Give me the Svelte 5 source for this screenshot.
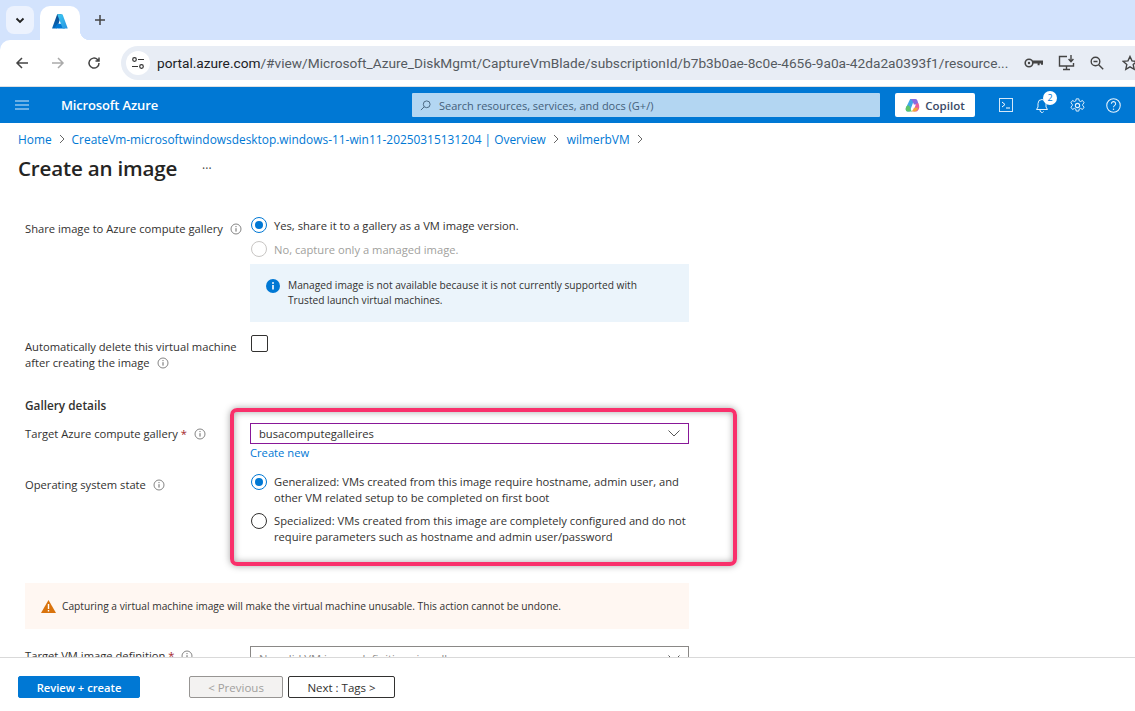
<script>
	let crumbs = [
		"Home",
		"CreateVm-microsoftwindowsdesktop.windows-11-win11-20250315131204 | Overview",
		"wilmerbVM"
	];
</script>

{#snippet infoIcon()}
	<svg class="info" viewBox="0 0 12 12" width="12" height="12">
		<circle cx="6" cy="6" r="5" fill="none" stroke="#777" stroke-width="0.9" />
		<path d="M6 5.2v3.4" stroke="#666" stroke-width="1" />
		<circle cx="6" cy="3.6" r="0.6" fill="#666" />
	</svg>
{/snippet}

<div class="page">
	<div class="tabstrip">
		<div class="tabmenu">
			<svg viewBox="0 0 12 12" width="12" height="12"><path d="M2.5 4.5L6 8l3.5-3.5" fill="none" stroke="#222" stroke-width="1.8" /></svg>
		</div>
		<div class="tab">
			<svg viewBox="0 0 16 15" width="16" height="15">
				<defs>
					<linearGradient id="az1" x1="0" y1="0" x2="0" y2="1"><stop offset="0" stop-color="#114a8b" /><stop offset="1" stop-color="#0669bc" /></linearGradient>
					<linearGradient id="az2" x1="0" y1="0" x2="1" y2="1"><stop offset="0" stop-color="#3ccbf4" /><stop offset="1" stop-color="#2892df" /></linearGradient>
				</defs>
				<path d="M5.2 0.3H9.6L5 14.6H0.6a.5.5 0 0 1-.4-.7z" fill="url(#az1)" />
				<path d="M11.8 9.8H5.4l-2.6 3.9 3.2.9h6.9z" fill="#0078d4" />
				<path d="M5.2.3h4.9c.3 0 .5.2.6.4l4.9 13.2a.5.5 0 0 1-.4.7h-4.5L5.2.3z" fill="url(#az2)" />
			</svg>
		</div>
		<svg class="newtab" viewBox="0 0 12 12" width="12" height="12"><path d="M6 1v10M1 6h10" stroke="#444" stroke-width="1.5" /></svg>
	</div>

	<div class="toolbar">
		<svg viewBox="0 0 14 14" width="14" height="14"><path d="M13 7H2M7 2L2 7l5 5" fill="none" stroke="#444" stroke-width="1.5" /></svg>
		<svg viewBox="0 0 14 14" width="14" height="14"><path d="M1 7h11M7 2l5 5-5 5" fill="none" stroke="#aaa" stroke-width="1.5" /></svg>
		<svg viewBox="0 0 14 14" width="14" height="14"><path d="M12 7a5 5 0 1 1-1.5-3.5L12 5M12 1.5V5H8.5" fill="none" stroke="#444" stroke-width="1.5" /></svg>
		<div class="urlbar">
			<div class="sitebtn">
				<svg viewBox="0 0 14 14" width="14" height="14">
					<circle cx="3.5" cy="3.5" r="1.8" fill="none" stroke="#333" stroke-width="1.2" />
					<path d="M7 3.5h6M1 10.5h6" stroke="#333" stroke-width="1.2" />
					<circle cx="10.5" cy="10.5" r="1.8" fill="none" stroke="#333" stroke-width="1.2" />
				</svg>
			</div>
			<span class="url"><span class="host">portal.azure.com</span>/#view/Microsoft_Azure_DiskMgmt/CaptureVmBlade/subscriptionId/b7b3b0ae-8c0e-4656-9a0a-42da2a0393f1/resource...</span>
			<div class="urlicons">
				<svg viewBox="0 0 19 12" width="19" height="12">
					<circle cx="5" cy="6" r="3.8" fill="none" stroke="#444" stroke-width="1.6" />
					<circle cx="5" cy="6" r="1.2" fill="#444" />
					<path d="M8.500 3.600H19v4.200h-2V6.600h-1.400v1.600h-2V6.600H8.500z" fill="#444" />
				</svg>
				<svg viewBox="0 0 17 16" width="17" height="16">
					<path d="M9 1.5H1.5v9.5h14V8" fill="none" stroke="#444" stroke-width="1.4" />
					<path d="M5 14.5h7M8.5 11v3.5" stroke="#444" stroke-width="1.4" />
					<path d="M13 0v6M10.6 4L13 6.6 15.4 4" fill="none" stroke="#444" stroke-width="1.4" />
				</svg>
				<svg viewBox="0 0 14 14" width="14" height="14">
					<circle cx="5.5" cy="5.5" r="4.3" fill="none" stroke="#444" stroke-width="1.4" />
					<path d="M3.5 5.5h4M8.7 8.7L13.2 13.2" stroke="#444" stroke-width="1.4" />
				</svg>
				<svg class="star" viewBox="0 0 16 16" width="16" height="16"><path d="M8 1.5l2 4.4 4.8.5-3.6 3.2 1 4.7L8 11.9l-4.2 2.4 1-4.7L1.2 6.4 6 5.9z" fill="none" stroke="#444" stroke-width="1.4" /></svg>
			</div>
		</div>
	</div>

	<div class="azurebar">
		<svg class="burger" viewBox="0 0 14 10" width="14" height="10"><path d="M0 1h14M0 5h14M0 9h14" stroke="#d5e8f8" stroke-width="1" /></svg>
		<span class="brand">Microsoft Azure</span>
		<div class="search">
			<svg viewBox="0 0 12 12" width="11" height="11"><circle cx="7.3" cy="4.7" r="3.7" fill="none" stroke="#44607a" /><path d="M4.6 7.4L1 11" stroke="#44607a" /></svg>
			<span>Search resources, services, and docs (G+/)</span>
		</div>
		<div class="copilot">
			<svg viewBox="0 0 16 16" width="15" height="15">
				<path d="M5.500 1H10L7.500 8 5 14.500H3C1 14.500.3 12.500 1 10.500z" fill="#3fa7e8" />
				<path d="M5.500 1H11c1.500 0 2 1 2.400 2.200L14.500 7H9.500L8 3.500C7.500 2 6.500 1.300 5.500 1z" fill="#8a6ce0" />
				<path d="M14.500 6c1.200 3 1 5.500-1 7.500-.8.800-1.800 1-2.700 1H9l2.500-7.500c.4-1 1.800-2 3-1z" fill="#e8609a" />
				<path d="M1 10c1-2.500 3.500-2.500 4.500 0l.8 2.500c.4 1.200 1 1.800 1.700 2H3c-2 0-2.800-2.500-2-4.500z" fill="#5ec46a" />
				<path d="M9.500 10.500H14c-.6 2.500-2 4-3.800 4H6.500c1.500-.4 2.300-2.200 3-4z" fill="#f4a63a" />
			</svg>
			<span>Copilot</span>
		</div>
		<div class="baricons">
			<svg viewBox="0 0 14 14" width="14" height="14"><rect x="0.5" y="0.500" width="13" height="13" fill="none" stroke="#d5e8f8" /><path d="M3 4l3 2.500L3 9M7 10h4" fill="none" stroke="#fff" /></svg>
			<div class="bell">
				<svg viewBox="0 0 14 15" width="14" height="15"><path d="M7 1.500a4 4 0 0 1 4 4v3.500l1.500 2.500h-11L3 9V5.500a4 4 0 0 1 4-4zM5.300 11.500a1.800 1.800 0 0 0 3.400 2" fill="none" stroke="#e6f2fb" /></svg>
				<span class="badge">2</span>
			</div>
			<svg viewBox="0 0 14 14" width="15" height="15"><circle cx="7" cy="7" r="2" fill="none" stroke="#e6f2fb" /><path d="M5.800.8h2.400l.4 1.900 1.300.6 1.700-1 1.600 2.200-1.300 1.300v1.400l1.300 1.300-1.600 2.200-1.700-1-1.300.6-.4 1.900H5.800l-.4-1.900-1.300-.6-1.700 1L.8 8.500l1.300-1.300V5.800L.8 4.500l1.600-2.200 1.700 1 1.300-.6z" fill="none" stroke="#e6f2fb" stroke-width="0.900" /></svg>
			<svg viewBox="0 0 14 14" width="15" height="15"><circle cx="7" cy="7" r="6.300" fill="none" stroke="#e6f2fb" /><path d="M5 5.400a2 2 0 1 1 3 1.700c-.7.400-1 .8-1 1.500" fill="none" stroke="#e6f2fb" /><circle cx="7" cy="10.400" r="0.700" fill="#e6f2fb" /></svg>
		</div>
	</div>

	<main class="main">
		<nav class="crumbs">
			{#each crumbs as crumb}
				<a href="#top">{crumb}</a>
				<svg viewBox="0 0 6 10" width="6" height="10"><path d="M1 1l4 4-4 4" fill="none" stroke="#666" /></svg>
			{/each}
		</nav>
		<div class="titlerow">
			<h1>Create an image</h1>
			<span class="dots">···</span>
		</div>

		<div class="form">
			<div class="row share">
				<div class="label">Share image to Azure compute gallery {@render infoIcon()}</div>
				<div class="control">
					<div class="radio"><span class="dot on"></span><span>Yes, share it to a gallery as a VM image version.</span></div>
					<div class="radio disabled"><span class="dot"></span><span>No, capture only a managed image.</span></div>
					<div class="infobox">
						<svg viewBox="0 0 14 14" width="14" height="14"><circle cx="7" cy="7" r="7" fill="#0078d4" /><rect x="6.200" y="6" width="1.600" height="4.500" fill="#fff" /><circle cx="7" cy="4" r="0.950" fill="#fff" /></svg>
						<p>Managed image is not available because it is not currently supported with<br />Trusted launch virtual machines.</p>
					</div>
				</div>
			</div>

			<div class="row autodel">
				<div class="label">Automatically delete this virtual machine<br />after creating the image {@render infoIcon()}</div>
				<div class="control"><span class="checkbox"></span></div>
			</div>

			<h2>Gallery details</h2>

			<div class="row target">
				<div class="label">Target Azure compute gallery <span class="req">*</span> {@render infoIcon()}</div>
				<div class="control">
					<div class="select focus">
						<span>busacomputegalleires</span>
						<svg viewBox="0 0 12 7" width="12" height="7"><path d="M.5.500L6 6 11.500.500" fill="none" stroke="#555" /></svg>
					</div>
					<a class="create" href="#top">Create new</a>
				</div>
			</div>

			<div class="row osstate">
				<div class="label">Operating system state {@render infoIcon()}</div>
				<div class="control">
					<div class="radio two"><span class="dot on"></span><span>Generalized: VMs created from this image require hostname, admin user, and<br />other VM related setup to be completed on first boot</span></div>
					<div class="radio two"><span class="dot dark"></span><span>Specialized: VMs created from this image are completely configured and do not<br />require parameters such as hostname and admin user/password</span></div>
				</div>
			</div>

			<div class="warning">
				<svg viewBox="0 0 15 13" width="15" height="13"><path d="M7.500 0L15 13H0z" fill="#d9730d" /><rect x="6.800" y="4" width="1.400" height="5" fill="#fff" /><rect x="6.800" y="10" width="1.400" height="1.500" fill="#fff" /></svg>
				<span>Capturing a virtual machine image will make the virtual machine unusable. This action cannot be undone.</span>
			</div>

			<div class="row next">
				<div class="label">Target VM image definition <span class="req">*</span> {@render infoIcon()}</div>
				<div class="control">
					<div class="select muted">
						<span>No valid VM image definitions in gallery</span>
						<svg viewBox="0 0 12 7" width="12" height="7"><path d="M.5.500L6 6 11.500.500" fill="none" stroke="#555" /></svg>
					</div>
				</div>
			</div>
		</div>

		<div class="highlight"></div>
	</main>

	<footer class="footer">
		<button class="primary">Review + create</button>
		<button class="prev" disabled>&lt; Previous</button>
		<button class="nextbtn">Next : Tags &gt;</button>
	</footer>
</div>

<style>
	:global(body) {
		margin: 0;
		background: #fff;
	}
	.page {
		display: flex;
		flex-direction: column;
		height: 711px;
		overflow: hidden;
		background: #d3e3fd;
		font-family: "Open Sans", "Noto Sans", sans-serif;
		font-size: 11.2px;
		color: #323130;
	}
	.tabstrip {
		height: 40px;
		flex: none;
		background: #d3e3fd;
		display: flex;
		align-items: flex-start;
		box-sizing: border-box;
		padding: 6px 0 0 6px;
	}
	.tabmenu {
		width: 28px;
		height: 28px;
		background: #ecf2fe;
		border-radius: 8px;
		display: flex;
		align-items: center;
		justify-content: center;
	}
	.tab {
		width: 40px;
		height: 34px;
		margin-left: 6px;
		background: #fff;
		border-radius: 10px 10px 0 0;
		display: flex;
		align-items: center;
		justify-content: center;
		padding-bottom: 4px;
		box-sizing: border-box;
		position: relative;
	}
	.tab::after {
		content: "";
		position: absolute;
		right: -10px;
		bottom: 0;
		width: 10px;
		height: 10px;
		background: radial-gradient(circle at 100% 0, #d3e3fd 10px, #fff 10.5px);
	}
	.newtab {
		margin: 8px 0 0 14px;
	}
	.toolbar {
		height: 47px;
		flex: none;
		background: #fff;
		border-bottom: 1px solid #dde0e4;
		border-radius: 10px 0 0 0;
		box-sizing: border-box;
		display: flex;
		align-items: center;
		gap: 22px;
		padding-left: 15px;
	}
	.urlbar {
		flex: 1;
		height: 34px;
		margin-left: -2px;
		background: #e8edf5;
		border-radius: 17px 0 0 17px;
		display: flex;
		align-items: center;
		position: relative;
		min-width: 0;
		overflow: hidden;
	}
	.sitebtn {
		width: 24px;
		height: 24px;
		margin-left: 5px;
		background: #fff;
		border-radius: 50%;
		display: flex;
		align-items: center;
		justify-content: center;
		flex: none;
	}
	.url {
		margin-left: 7px;
		font-size: 13.7px;
		font-family: "Roboto", sans-serif;
		color: #555a60;
		white-space: nowrap;
		width: 856px;
		flex: none;
	}
	.host {
		color: #202124;
	}
	.urlicons {
		display: flex;
		align-items: center;
		gap: 15px;
		margin-left: 11px;
		flex: none;
	}
	.star {
		margin-left: 3px;
		flex: none;
	}
	.azurebar {
		height: 36px;
		flex: none;
		background: #0078d4;
		display: flex;
		align-items: center;
		color: #fff;
	}
	.burger {
		margin-left: 15px;
	}
	.brand {
		margin-left: 32px;
		width: 351px;
		font-size: 13px;
		font-weight: 600;
		letter-spacing: -0.15px;
	}
	.search {
		width: 468px;
		height: 24px;
		background: #b3d6f2;
		border-radius: 1px;
		display: flex;
		align-items: center;
		gap: 8px;
		padding-left: 8px;
		box-sizing: border-box;
		color: #44607a;
		font-size: 11px;
	}
	.copilot {
		width: 80px;
		height: 24px;
		margin-left: 15px;
		background: #fff;
		border-radius: 2px;
		display: flex;
		align-items: center;
		justify-content: center;
		gap: 5px;
		color: #3a4a66;
		font-size: 11.5px;
		font-weight: 600;
	}
	.baricons {
		margin-left: 24px;
		display: flex;
		align-items: center;
		gap: 21px;
	}
	.bell {
		position: relative;
		display: flex;
		margin-left: 1px;
	}
	.badge {
		position: absolute;
		left: 8px;
		top: -7px;
		width: 14px;
		height: 14px;
		border-radius: 50%;
		background: #fff;
		color: #0078d4;
		font-size: 9px;
		line-height: 14px;
		text-align: center;
	}
	.main {
		flex: 1;
		min-height: 0;
		overflow: hidden;
		position: relative;
		background: #fff;
	}
	.crumbs {
		display: flex;
		align-items: center;
		gap: 7px;
		padding: 8px 0 0 18px;
		height: 16px;
		font-size: 11.9px;
	}
	.crumbs a, .create {
		color: #0078d4;
		text-decoration: none;
	}
	.crumbs a:last-of-type {
		margin-left: 1px;
	}
	.titlerow {
		display: flex;
		align-items: center;
		margin: 5px 0 0 18px;
		height: 32px;
	}
	h1 {
		margin: 0;
		font-size: 20.6px;
		font-weight: 600;
		color: #252423;
		letter-spacing: -0.2px;
	}
	.dots {
		margin-left: 25px;
		color: #444;
		font-size: 12px;
	}
	.form {
		padding: 29px 0 0 25px;
		width: 664px;
	}
	.row {
		display: grid;
		grid-template-columns: 225px 1fr;
	}
	.label {
		line-height: 16px;
		white-space: nowrap;
	}
	.info {
		vertical-align: -2px;
		margin-left: 4px;
	}
	.req {
		color: #a4262c;
	}
	.share .label {
		padding-top: 8px;
	}
	.radio {
		display: flex;
		align-items: center;
		gap: 7px;
		height: 24px;
	}
	.radio.disabled {
		color: #a19f9d;
	}
	.radio.two {
		height: auto;
		align-items: flex-start;
		line-height: 16px;
		margin-bottom: 7px;
	}
	.dot {
		width: 14px;
		height: 14px;
		flex: none;
		margin-left: 1px;
		border: 1px solid #c8c6c4;
		border-radius: 50%;
		position: relative;
	}
	.dot.dark {
		border-color: #323130;
	}
	.dot.on {
		border-color: #0078d4;
	}
	.dot.on::after {
		content: "";
		position: absolute;
		inset: 3px;
		border-radius: 50%;
		background: #0078d4;
	}
	.infobox {
		margin-top: 3px;
		height: 58px;
		background: #ebf4fb;
		display: flex;
		align-items: center;
		gap: 8px;
		padding: 0 16px;
		box-sizing: border-box;
		font-size: 10.2px;
	}
	.infobox p {
		margin: 0;
		line-height: 15px;
	}
	.infobox svg {
		flex: none;
		margin-bottom: 15px;
	}
	.autodel {
		margin-top: 13px;
	}
	.autodel .label {
		padding-top: 4px;
	}
	.checkbox {
		display: block;
		width: 15px;
		height: 15px;
		border: 1px solid #323130;
		border-radius: 2px;
		margin-left: 1px;
	}
	h2 {
		margin: 26px 0 0;
		font-size: 11.8px;
		line-height: 16px;
		font-weight: 600;
	}
	.target {
		margin-top: 10px;
	}
	.target .label {
		padding-top: 3px;
	}
	.select {
		height: 21px;
		box-sizing: border-box;
		display: flex;
		align-items: center;
		justify-content: space-between;
		padding: 0 8px;
		width: 439px;
		border: 1px solid #8a8886;
	}
	.select.focus {
		border-color: #881798;
	}
	.select.muted {
		color: #8a8886;
	}
	.create {
		display: block;
		line-height: 16px;
		margin-top: 1px;
	}
	.osstate {
		margin-top: 13px;
	}
	.osstate .label {
		padding-top: 3px;
	}
	.warning {
		margin-top: 31px;
		height: 46px;
		background: #fff7f2;
		display: flex;
		align-items: center;
		gap: 6px;
		padding-left: 16px;
		font-size: 10.2px;
	}
	.next {
		margin-top: 17px;
	}
	.next .label {
		padding-top: 2px;
	}
	.next .select {
		height: 24px;
	}
	.highlight {
		position: absolute;
		left: 230px;
		top: 285px;
		width: 507px;
		height: 158px;
		box-sizing: border-box;
		border: 4px solid #f9306b;
		border-radius: 7px;
		box-shadow: 0 0 7px rgba(0, 0, 0, 0.35), inset 0 0 7px rgba(0, 0, 0, 0.35);
		pointer-events: none;
	}
	.footer {
		height: 54px;
		flex: none;
		border-top: 1px solid #d9d9d9;
		box-sizing: border-box;
		padding: 18px 0 0 18px;
		display: flex;
		align-items: flex-start;
		background: #fff;
	}
	button {
		height: 22px;
		font-family: inherit;
		font-size: 11.5px;
		padding: 0;
		border-radius: 2px;
		box-sizing: border-box;
	}
	.primary {
		width: 122px;
		background: #0078d4;
		border: 1px solid #0078d4;
		color: #fff;
		font-weight: 600;
		font-size: 11.2px;
	}
	.prev {
		width: 94px;
		margin-left: 49px;
		background: #f3f2f1;
		border: 1px solid #979593;
		color: #a19f9d;
	}
	.nextbtn {
		width: 107px;
		margin-left: 5px;
		background: #fff;
		border: 1px solid #323130;
		color: #323130;
	}
</style>
